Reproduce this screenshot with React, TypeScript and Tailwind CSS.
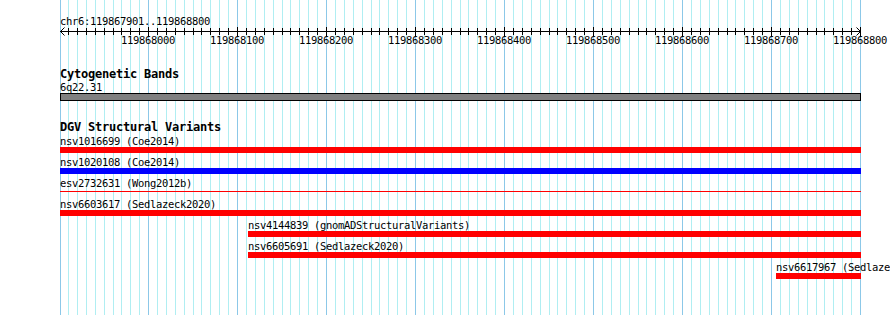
const START = 119867901;
const END = 119868800;
const LEFT = 60;
const WIDTH = 800;
const RIGHT = LEFT + WIDTH + 1;

const toX = (pos: number) => LEFT + Math.round(((pos - START) * WIDTH) / (END - START));

const gridPositions: number[] = [];
for (let p = 119867910; p <= END; p += 10) gridPositions.push(p);

const majorPositions = gridPositions.filter((p) => p % 100 === 0);

type Kind = 'red' | 'blue' | 'line';

interface Variant {
  name: string;
  start: number;
  kind: Kind;
}

const variants: Variant[] = [
  { name: 'nsv1016699 (Coe2014)', start: START, kind: 'red' },
  { name: 'nsv1020108 (Coe2014)', start: START, kind: 'blue' },
  { name: 'esv2732631 (Wong2012b)', start: START, kind: 'line' },
  { name: 'nsv6603617 (Sedlazeck2020)', start: START, kind: 'red' },
  { name: 'nsv4144839 (gnomADStructuralVariants)', start: 119868112, kind: 'red' },
  { name: 'nsv6605691 (Sedlazeck2020)', start: 119868112, kind: 'red' },
  { name: 'nsv6617967 (Sedlazeck2020)', start: 119868706, kind: 'red' },
];

function Grid() {
  return (
    <svg className="absolute inset-0" width={890} height={315}>
      <line x1={LEFT + 0.5} x2={LEFT + 0.5} y1={0} y2={315} stroke="#8cc8e8" />
      {gridPositions.map((p) => {
        const x = toX(p) + 0.5;
        const major = p % 100 === 0;
        return <line key={p} x1={x} x2={x} y1={0} y2={315} stroke={major ? '#8cc8e8' : '#b0eef2'} />;
      })}
    </svg>
  );
}

function Ruler() {
  return (
    <div className="relative h-[19px]">
      <svg className="absolute left-0 -top-[4px] overflow-visible" width={890} height={12}>
        <line x1={LEFT} x2={LEFT + WIDTH} y1={6.5} y2={6.5} stroke="#000" />
        <polyline points={`${LEFT + 4.5},2.5 ${LEFT + 0.5},6.5 ${LEFT + 4.5},10.5`} fill="none" stroke="#000" />
        <polyline
          points={`${LEFT + WIDTH - 3.5},2.5 ${LEFT + WIDTH + 0.5},6.5 ${LEFT + WIDTH - 3.5},10.5`}
          fill="none"
          stroke="#000"
        />
        {gridPositions.map((p) => {
          const x = toX(p) + 0.5;
          const major = p % 100 === 0;
          return <line key={p} x1={x} x2={x} y1={major ? 2 : 3} y2={major ? 11 : 10} stroke="#000" />;
        })}
      </svg>
      {majorPositions.map((p) => (
        <div
          key={p}
          className="absolute top-[5px] h-[13px] leading-[13px] whitespace-nowrap"
          style={{ left: toX(p) - 27 }}
        >
          {p}
        </div>
      ))}
    </div>
  );
}

function VariantRow({ variant }: { variant: Variant }) {
  const x = toX(variant.start);
  return (
    <div className="h-[21px]">
      <div className="h-[12px] leading-[12px] whitespace-nowrap" style={{ marginLeft: x }}>
        {variant.name}
      </div>
      <div className="h-[6px]" style={{ marginLeft: x, width: RIGHT - x }}>
        {variant.kind === 'line' ? (
          <div className="mt-[2px] h-[1px] bg-[#ff0000]" />
        ) : (
          <div className={variant.kind === 'blue' ? 'h-full bg-[#0000ff]' : 'h-full bg-[#ff0000]'} />
        )}
      </div>
    </div>
  );
}

export default function App() {
  return (
    <div className="relative w-[890px] h-[315px] overflow-hidden bg-white text-black font-['DejaVu_Sans_Mono',monospace] text-[10.5px] tracking-[-0.32px]">
      <Grid />
      <div className="relative">
        <div className="pt-[15px] pl-[60px] h-[29px] leading-[13px]">chr6:119867901..119868800</div>
        <Ruler />

        <div className="mt-[20px] pl-[60px] h-[13px] leading-[12px] font-bold text-[12px] tracking-[-0.22px]">
          Cytogenetic Bands
        </div>
        <div className="pl-[60px] h-[12px] leading-[12px]">6q22.31</div>
        <div className="ml-[60px] w-[801px] h-[8px] border border-black bg-[#808080]" />

        <div className="mt-[20px] pl-[60px] h-[14px] leading-[12px] font-bold text-[12px] tracking-[-0.22px]">
          DGV Structural Variants
        </div>
        {variants.map((v) => (
          <VariantRow key={v.name} variant={v} />
        ))}
      </div>
    </div>
  );
}
